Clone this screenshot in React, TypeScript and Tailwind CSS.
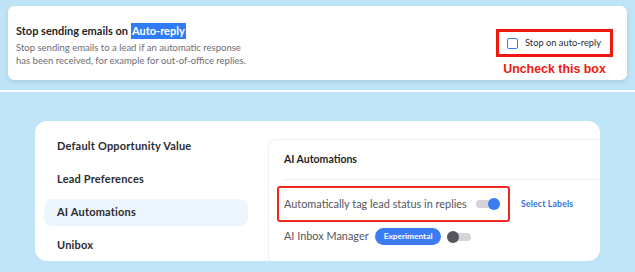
import type { ReactNode } from 'react'

const font = { fontFamily: 'Lato, "Open Sans", sans-serif' }

function Toggle({ on }: { on: boolean }) {
  return (
    <span className="relative inline-flex h-[8px] w-[24px] items-center rounded-full bg-[#d4d4d8]">
      <span
        className={`absolute h-[12px] w-[12px] rounded-full ${on ? 'right-0 bg-[#3b7cf5]' : 'left-0 bg-[#55565e]'}`}
      />
    </span>
  )
}

function NavItem({ children, active }: { children: ReactNode; active?: boolean }) {
  return (
    <div
      className={`flex h-[27px] items-center rounded-lg px-[13px] text-[11px] font-bold tracking-[0.2px] text-[#2b2b33] ${
        active ? 'bg-[#eef6fd]' : ''
      }`}
    >
      {children}
    </div>
  )
}

export default function App() {
  return (
    <div className="h-[272px] w-[635px] overflow-hidden bg-[#bfe3f7]" style={font}>
      {/* top: auto-reply setting */}
      <div className="h-[90px] px-[8px] pt-[6px]">
        <div className="flex h-[74px] items-start justify-between rounded-md bg-white pl-[8px] pr-[14px] shadow-[0_2px_4px_rgba(40,80,120,0.15)]">
          <div className="pt-[17px]">
            <div className="flex items-center text-[11px] font-bold text-[#1f1f27]">
              Stop sending emails on
              <span className="ml-[3px] bg-[#2f7cf6] px-[1px] leading-[16px] text-white">Auto-reply</span>
            </div>
            <p className="mt-[1px] text-[9.5px] leading-[13px] text-[#6b6d76]">
              Stop sending emails to a lead if an automatic response
              <br />
              has been received, for example for out-of-office replies.
            </p>
          </div>
          <div className="flex flex-col items-center pt-[23px]">
            <div className="flex h-[28px] w-[117px] items-center gap-[7px] border-[3px] border-[#f0190d] pl-[8px]">
              <span className="h-[11px] w-[11px] rounded-[2px] border-[1.5px] border-[#3b7cf5]" />
              <span className="text-[9.3px] text-[#2b2b33]">Stop on auto-reply</span>
            </div>
            <div
              className="mt-[3px] text-[12.4px] font-bold text-[#f0190d]"
              style={{ fontFamily: '"Liberation Sans", Arial, sans-serif' }}
            >
              Uncheck this box
            </div>
          </div>
        </div>
      </div>
      <div className="h-[2px] bg-white" />

      {/* bottom: settings panel */}
      <div className="pl-[35px] pt-[29px]">
        <div className="flex h-[140px] w-[565px] overflow-hidden rounded-xl bg-white">
          <div className="flex w-[233px] flex-col gap-[6px] pl-[9px] pr-[20px] pt-[12px]">
            <NavItem>Default Opportunity Value</NavItem>
            <NavItem>Lead Preferences</NavItem>
            <NavItem active>AI Automations</NavItem>
            <NavItem>Unibox</NavItem>
          </div>
          <div className="mt-[18px] flex-1 rounded-tl-lg border-l border-t border-[#efeff1] pl-[15px]">
            <div className="flex h-[40px] items-center border-b border-[#ededf0] text-[10.5px] font-bold text-[#1f1f27]">
              AI Automations
            </div>
            <div className="mt-[6px] flex items-center">
              <div className="-ml-[7px] flex h-[36px] w-[233px] items-center gap-[9px] rounded-[3px] border-2 border-[#ec2a1f] pl-[5px]">
                <span className="text-[10.9px] text-[#55565e]">Automatically tag lead status in replies</span>
                <Toggle on />
              </div>
              <span className="ml-[11px] text-[8.6px] font-bold tracking-[0.2px] text-[#2f6fdc]">Select Labels</span>
            </div>
            <div className="mt-[6px] flex items-center gap-[6px]">
              <span className="text-[10.9px] text-[#55565e]">AI Inbox Manager</span>
              <span className="flex h-[17px] items-center rounded-full bg-[#3b7cf5] px-[9px] text-[8.3px] font-bold text-white">
                Experimental
              </span>
              <Toggle on={false} />
            </div>
          </div>
        </div>
      </div>
    </div>
  )
}
